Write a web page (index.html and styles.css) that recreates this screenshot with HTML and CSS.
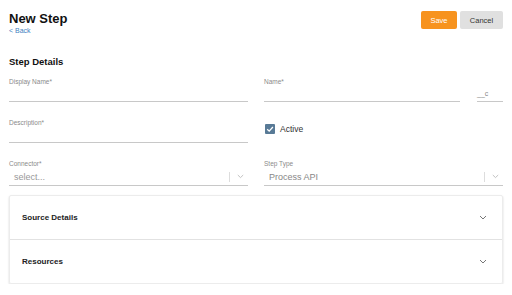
FILE: index.html
```html
<!DOCTYPE html>
<html lang="en">
<head>
    <meta charset="UTF-8">
    <meta name="viewport" content="width=device-width, initial-scale=1.0">
    <title>New Step</title>
    <link rel="stylesheet" href="styles.css">
</head>
<body>
    <div class="page">
        <header>
            <div class="title-block">
                <h1>New Step</h1>
                <a href="#" class="back">&lt; Back</a>
            </div>
            <div class="actions">
                <button class="btn save">Save</button>
                <button class="btn cancel">Cancel</button>
            </div>
        </header>

        <h2 class="section-title">Step Details</h2>

        <div class="form-grid">
            <div class="field">
                <label>Display Name*</label>
                <div class="input"></div>
            </div>
            <div class="name-row">
                <div class="field grow">
                    <label>Name*</label>
                    <div class="input"></div>
                </div>
                <div class="field suffix">
                    <label>&nbsp;</label>
                    <div class="input"><span>__c</span></div>
                </div>
            </div>

            <div class="field">
                <label>Description*</label>
                <div class="input"></div>
            </div>
            <div class="check-row">
                <span class="checkbox">
                    <svg width="10" height="10" viewBox="0 0 10 10"><path d="M2.2 5.2 L4.2 7.1 L7.9 3" fill="none" stroke="#fff" stroke-width="1.3"/></svg>
                </span>
                <span class="check-label">Active</span>
            </div>

            <div class="field">
                <label>Connector*</label>
                <div class="select">
                    <span class="placeholder">select...</span>
                    <span class="sep"></span>
                    <svg class="arrow" width="7" height="5" viewBox="0 0 7 5"><path d="M0.8 1 L3.5 3.6 L6.2 1" fill="none" stroke="#bbb" stroke-width="0.9"/></svg>
                </div>
            </div>
            <div class="field">
                <label>Step Type</label>
                <div class="select">
                    <span class="value">Process API</span>
                    <span class="sep"></span>
                    <svg class="arrow" width="7" height="5" viewBox="0 0 7 5"><path d="M0.8 1 L3.5 3.6 L6.2 1" fill="none" stroke="#bbb" stroke-width="0.9"/></svg>
                </div>
            </div>
        </div>

        <div class="accordion">
            <div class="acc-item">
                <span>Source Details</span>
                <svg width="8" height="5" viewBox="0 0 8 5"><path d="M1 1 L4 4 L7 1" fill="none" stroke="#777" stroke-width="1"/></svg>
            </div>
            <div class="acc-item">
                <span>Resources</span>
                <svg width="8" height="5" viewBox="0 0 8 5"><path d="M1 1 L4 4 L7 1" fill="none" stroke="#777" stroke-width="1"/></svg>
            </div>
        </div>
    </div>
</body>
</html>
```

FILE: styles.css
```css
body {
    margin: 0;
    padding: 0;
    background-color: #fff;
    font-family: "Liberation Sans", Arial, sans-serif;
    color: #222;
}
.page {
    padding: 11px 9px 0 9px;
}
header {
    display: flex;
    justify-content: space-between;
    align-items: flex-start;
}
header h1 {
    margin: 0;
    font-size: 13px;
    line-height: 15px;
    font-weight: bold;
    color: #111;
}
.back {
    display: block;
    font-size: 7px;
    line-height: 9px;
    color: #3f7fbf;
    text-decoration: none;
}
.actions {
    display: flex;
    gap: 3px;
}
.btn {
    height: 18px;
    border: none;
    border-radius: 2px;
    font-family: "Liberation Sans", Arial, sans-serif;
    font-size: 7.5px;
    padding: 0;
    cursor: pointer;
}
.save {
    width: 36px;
    background-color: #f7931e;
    color: #fff;
}
.cancel {
    width: 43px;
    background-color: #e0e0e0;
    color: #333;
}
.section-title {
    margin: 21px 0 0 0;
    font-size: 9.5px;
    line-height: 12px;
    font-weight: bold;
    color: #111;
}
.form-grid {
    margin-top: 10px;
    display: grid;
    grid-template-columns: 1fr 1fr;
    column-gap: 16px;
    row-gap: 17px;
}
.field label {
    display: block;
    font-size: 6.5px;
    line-height: 8px;
    color: #8a8a8a;
}
.field .input {
    height: 15px;
    border-bottom: 1px solid #c8c8c8;
}
.name-row {
    display: flex;
    gap: 17px;
}
.name-row .grow {
    flex: 1;
}
.name-row .suffix {
    width: 26px;
}
.suffix .input span {
    display: block;
    font-size: 7px;
    line-height: 8px;
    padding-top: 4px;
    color: #888;
}
.check-row {
    display: flex;
    align-items: center;
    gap: 5px;
    padding: 5px 0 0 1px;
    align-self: start;
}
.checkbox {
    width: 10px;
    height: 10px;
    border-radius: 1px;
    background-color: #587a96;
    display: flex;
}
.check-label {
    font-size: 8.5px;
    line-height: 10px;
    color: #333;
}
.select {
    height: 17px;
    border-bottom: 1px solid #c8c8c8;
    display: flex;
    align-items: center;
    padding: 0 4px 0 5px;
}
.select .placeholder {
    flex: 1;
    font-size: 9px;
    color: #999;
}
.select .value {
    flex: 1;
    font-size: 9px;
    color: #888;
}
.select .sep {
    width: 1px;
    height: 10px;
    background-color: #ddd;
    margin-right: 7px;
}
.accordion {
    margin-top: 9px;
    border: 1px solid #ececec;
    border-radius: 2px;
    box-shadow: 0 1px 2px rgba(0, 0, 0, 0.18);
}
.acc-item {
    height: 43px;
    display: flex;
    align-items: center;
    justify-content: space-between;
    padding: 0 15px 0 12px;
    font-size: 8px;
    font-weight: bold;
    color: #222;
}
.acc-item + .acc-item {
    border-top: 1px solid #e2e2e2;
}
```
